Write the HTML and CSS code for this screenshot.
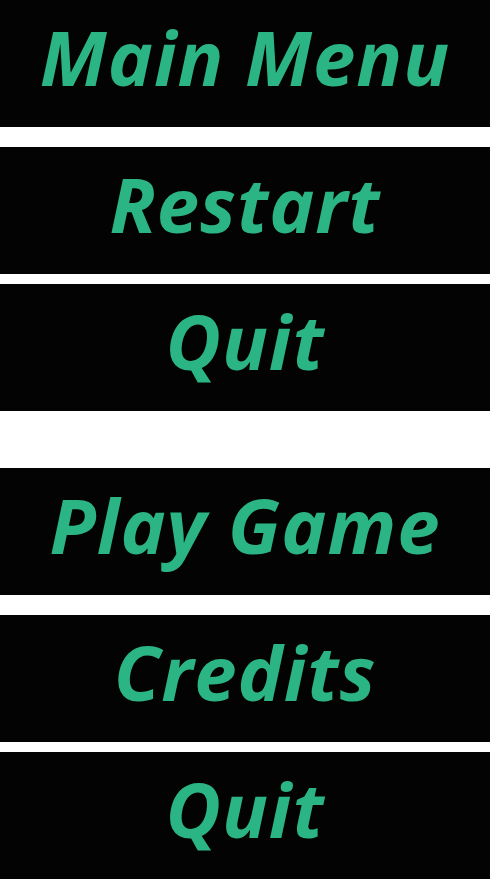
FILE: index.html
```html
<!DOCTYPE html>
<html>
<head>
<meta charset="utf-8">
<link rel="stylesheet" href="styles.css">
</head>
<body>
<div class="menu">
  <div class="btn">Main Menu</div>
  <div class="btn gap-lg">Restart</div>
  <div class="btn gap-sm">Quit</div>
</div>
<div class="menu second">
  <div class="btn">Play Game</div>
  <div class="btn gap-lg">Credits</div>
  <div class="btn gap-sm">Quit</div>
</div>
</body>
</html>
```
FILE: styles.css
```css
html, body {
  margin: 0;
  padding: 0;
  background: #ffffff;
}
.menu {
  display: flex;
  flex-direction: column;
}
.second {
  margin-top: 57px;
}
.btn {
  height: 127px;
  box-sizing: border-box;
  padding-bottom: 14px;
  background: #030303;
  color: #2bb584;
  display: flex;
  align-items: center;
  justify-content: center;
  font-family: "Open Sans", sans-serif;
  font-style: italic;
  font-weight: 700;
  font-size: 76px;
  letter-spacing: 1px;
  line-height: 1;
}
.gap-lg { margin-top: 20px; }
.gap-sm { margin-top: 10px; }
```
